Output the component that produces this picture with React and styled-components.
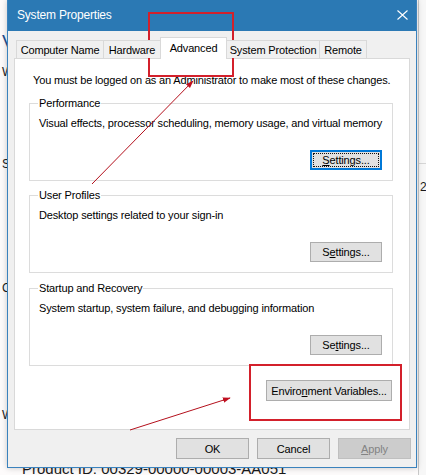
import React from "react";
import styled, { createGlobalStyle } from "styled-components";

const GlobalStyle = createGlobalStyle`
  html, body {
    margin: 0;
    padding: 0;
    overflow: hidden;
    background: #ffffff;
  }
  * { box-sizing: border-box; }
`;

const Desktop = styled.div`
  position: relative;
  width: 426px;
  height: 475px;
  overflow: hidden;
  background: #ffffff;
  font-family: "Liberation Sans", Arial, sans-serif;
`;

/* the control panel window that sits behind the dialog */
const BackWindow = styled.div`
  display: grid;
  grid-template-columns: 418px 1fr;
  height: 475px;
  background: #fdfbfb;
`;

const BackLeft = styled.div`
  display: flex;
  flex-direction: column;
  padding-left: 2px;
  white-space: nowrap;
`;

const BackRight = styled.div`
  display: flex;
  flex-direction: column;
  border-left: 1px solid #c8c8c8;
  background: #f7f7f7;
  white-space: nowrap;
`;

const BackLine = styled.div`
  margin-top: ${(p) => p.$mt}px;
  font-size: ${(p) => p.$size || 12}px;
  line-height: ${(p) => (p.$size || 12) + 3}px;
  color: ${(p) => p.$color || "#1a1a1a"};
  padding-left: ${(p) => p.$pl || 0}px;
`;

const BackRule = styled.div`
  margin-top: ${(p) => p.$mt}px;
  border-top: 1px solid #d6d6d6;
`;

/* dialog */
const Dialog = styled.div`
  position: absolute;
  left: 7px;
  top: 0;
  width: 410px;
  height: 468px;
  border: 1px solid #3a82bd;
  border-top: none;
  background: #f0f0f0;
  display: flex;
  flex-direction: column;
  box-shadow: 0 0 6px rgba(0, 0, 0, 0.22);
  font-size: 11px;
  letter-spacing: -0.15px;
  color: #000;
`;

const TitleBar = styled.div`
  height: 31px;
  flex: none;
  background: #2b79b4;
  display: flex;
  align-items: center;
  justify-content: space-between;
  padding: 0 8px 1px 9px;
`;

const Title = styled.span`
  color: #ffffff;
  font-size: 12px;
  letter-spacing: -0.2px;
`;

const CloseIcon = () => (
  <svg width="11" height="10" viewBox="0 0 11 10">
    <path d="M0.5 0.5 L10.5 9.5 M10.5 0.5 L0.5 9.5" stroke="#ffffff" strokeWidth="1.1" fill="none" />
  </svg>
);

const Body = styled.div`
  flex: 1;
  display: flex;
  flex-direction: column;
  padding: 6px 6px 0 6px;
`;

const TabStrip = styled.div`
  display: flex;
  align-items: flex-end;
  height: 21px;
  padding-left: 2px;
`;

const Tab = styled.div`
  width: ${(p) => p.$w}px;
  height: ${(p) => (p.$active ? 22 : 18)}px;
  margin-left: ${(p) => (p.$first ? 0 : -1)}px;
  margin-bottom: ${(p) => (p.$active ? -1 : 0)}px;
  display: flex;
  align-items: center;
  justify-content: center;
  padding-bottom: ${(p) => (p.$active ? 2 : 0)}px;
  border: 1px solid #d9d9d9;
  border-bottom: none;
  background: ${(p) => (p.$active ? "#ffffff" : "#f0f0f0")};
  position: relative;
  z-index: ${(p) => (p.$active ? 2 : 1)};
  white-space: nowrap;
`;

const Panel = styled.div`
  height: 372px;
  background: #ffffff;
  border: 1px solid #d9d9d9;
  display: flex;
  flex-direction: column;
  padding: 0 0 0 14px;
`;

const Notice = styled.div`
  margin: 14px 0 0 4px;
  line-height: 14px;
  white-space: nowrap;
`;

const GroupBox = styled.div`
  width: 364px;
  height: 78px;
  margin-top: ${(p) => p.$mt}px;
  border: 1px solid #dcdcdc;
  display: flex;
  flex-direction: column;
  padding: 0 10px 10px 8px;
`;

const Legend = styled.span`
  align-self: flex-start;
  margin-top: -8px;
  padding: 0 1px;
  line-height: 14px;
  background: #ffffff;
  white-space: nowrap;
`;

const GroupText = styled.div`
  margin-top: 6px;
  padding-left: 1px;
  line-height: 14px;
  white-space: nowrap;
`;

const Button = styled.button`
  width: ${(p) => p.$w || 72}px;
  height: ${(p) => p.$h || 20}px;
  margin-top: ${(p) => (p.$auto ? "auto" : "0")};
  align-self: ${(p) => (p.$auto ? "flex-end" : "auto")};
  padding: 0;
  font-family: "Liberation Sans", Arial, sans-serif;
  font-size: 11px;
  letter-spacing: -0.15px;
  color: ${(p) => (p.disabled ? "#838383" : "#000")};
  background: ${(p) => (p.disabled ? "#cccccc" : "#e1e1e1")};
  border: ${(p) =>
    p.$focused ? "2px solid #0078d7" : p.disabled ? "1px solid #bfbfbf" : "1px solid #adadad"};
  outline: ${(p) => (p.$focused ? "1px dotted #111" : "none")};
  outline-offset: -4px;
  border-radius: 0;
`;

const EnvRow = styled.div`
  width: 363px;
  display: flex;
  justify-content: flex-end;
  margin-top: 14px;
`;

const ButtonRow = styled.div`
  display: flex;
  justify-content: flex-end;
  gap: 8px;
  margin: 8px -1px 0 0;
`;

const Overlay = styled.svg`
  position: absolute;
  left: 0;
  top: 0;
  pointer-events: none;
`;

const Annotations = () => (
  <Overlay width="426" height="475" viewBox="0 0 426 475">
    <defs>
      <marker id="head" viewBox="0 0 10 10" refX="9" refY="5" markerWidth="8" markerHeight="8" orient="auto">
        <path d="M0 1.5 L10 5 L0 8.5 Z" fill="#c01020" />
      </marker>
    </defs>
    <rect x="149" y="13" width="84" height="63" fill="none" stroke="#d3202b" strokeWidth="2" />
    <rect x="250" y="365" width="151" height="55" fill="none" stroke="#d3202b" strokeWidth="2" />
    <line x1="92" y1="184" x2="193" y2="81" stroke="#b4101c" strokeWidth="1" markerEnd="url(#head)" />
    <line x1="130" y1="430" x2="230" y2="398" stroke="#b4101c" strokeWidth="1" markerEnd="url(#head)" />
  </Overlay>
);

const tabs = [
  { label: "Computer Name", w: 88 },
  { label: "Hardware", w: 58 },
  { label: "Advanced", w: 67, active: true },
  { label: "System Protection", w: 94 },
  { label: "Remote", w: 48 },
];

export default function App() {
  return (
    <Desktop>
      <GlobalStyle />
      <BackWindow>
        <BackLeft>
          <BackLine $mt={31} $size={19} $color="#1f4f8f">View basic information about your computer</BackLine>
          <BackLine $mt={12}>Windows edition</BackLine>
          <BackLine $mt={77}>System</BackLine>
          <BackLine $mt={109}>Computer name, domain, and workgroup settings</BackLine>
          <BackLine $mt={112}>Windows activation</BackLine>
          <BackLine $mt={37} $size={15} $pl={20}>Product ID: 00329-00000-00003-AA051</BackLine>
        </BackLeft>
        <BackRight>
          <BackRule $mt={163} />
          <BackLine $mt={16} $pl={1}>2.40 GHz</BackLine>
        </BackRight>
      </BackWindow>

      <Dialog>
        <TitleBar>
          <Title>System Properties</Title>
          <CloseIcon />
        </TitleBar>
        <Body>
          <TabStrip>
            {tabs.map((t, i) => (
              <Tab key={t.label} $w={t.w} $active={t.active} $first={i === 0}>
                {t.label}
              </Tab>
            ))}
          </TabStrip>
          <Panel>
            <Notice>You must be logged on as an Administrator to make most of these changes.</Notice>

            <GroupBox $mt={16}>
              <Legend>Performance</Legend>
              <GroupText>Visual effects, processor scheduling, memory usage, and virtual memory</GroupText>
              <Button $auto $focused>
                <u>S</u>ettings...
              </Button>
            </GroupBox>

            <GroupBox $mt={14}>
              <Legend>User Profiles</Legend>
              <GroupText>Desktop settings related to your sign-in</GroupText>
              <Button $auto>
                S<u>e</u>ttings...
              </Button>
            </GroupBox>

            <GroupBox $mt={15}>
              <Legend>Startup and Recovery</Legend>
              <GroupText>System startup, system failure, and debugging information</GroupText>
              <Button $auto>
                Se<u>t</u>tings...
              </Button>
            </GroupBox>

            <EnvRow>
              <Button $w={126} $h={21}>
                Enviro<u>n</u>ment Variables...
              </Button>
            </EnvRow>
          </Panel>
          <ButtonRow>
            <Button $w={73} $h={21}>OK</Button>
            <Button $w={73} $h={21}>Cancel</Button>
            <Button $w={73} $h={21} disabled>
              <u>A</u>pply
            </Button>
          </ButtonRow>
        </Body>
      </Dialog>

      <Annotations />
    </Desktop>
  );
}
